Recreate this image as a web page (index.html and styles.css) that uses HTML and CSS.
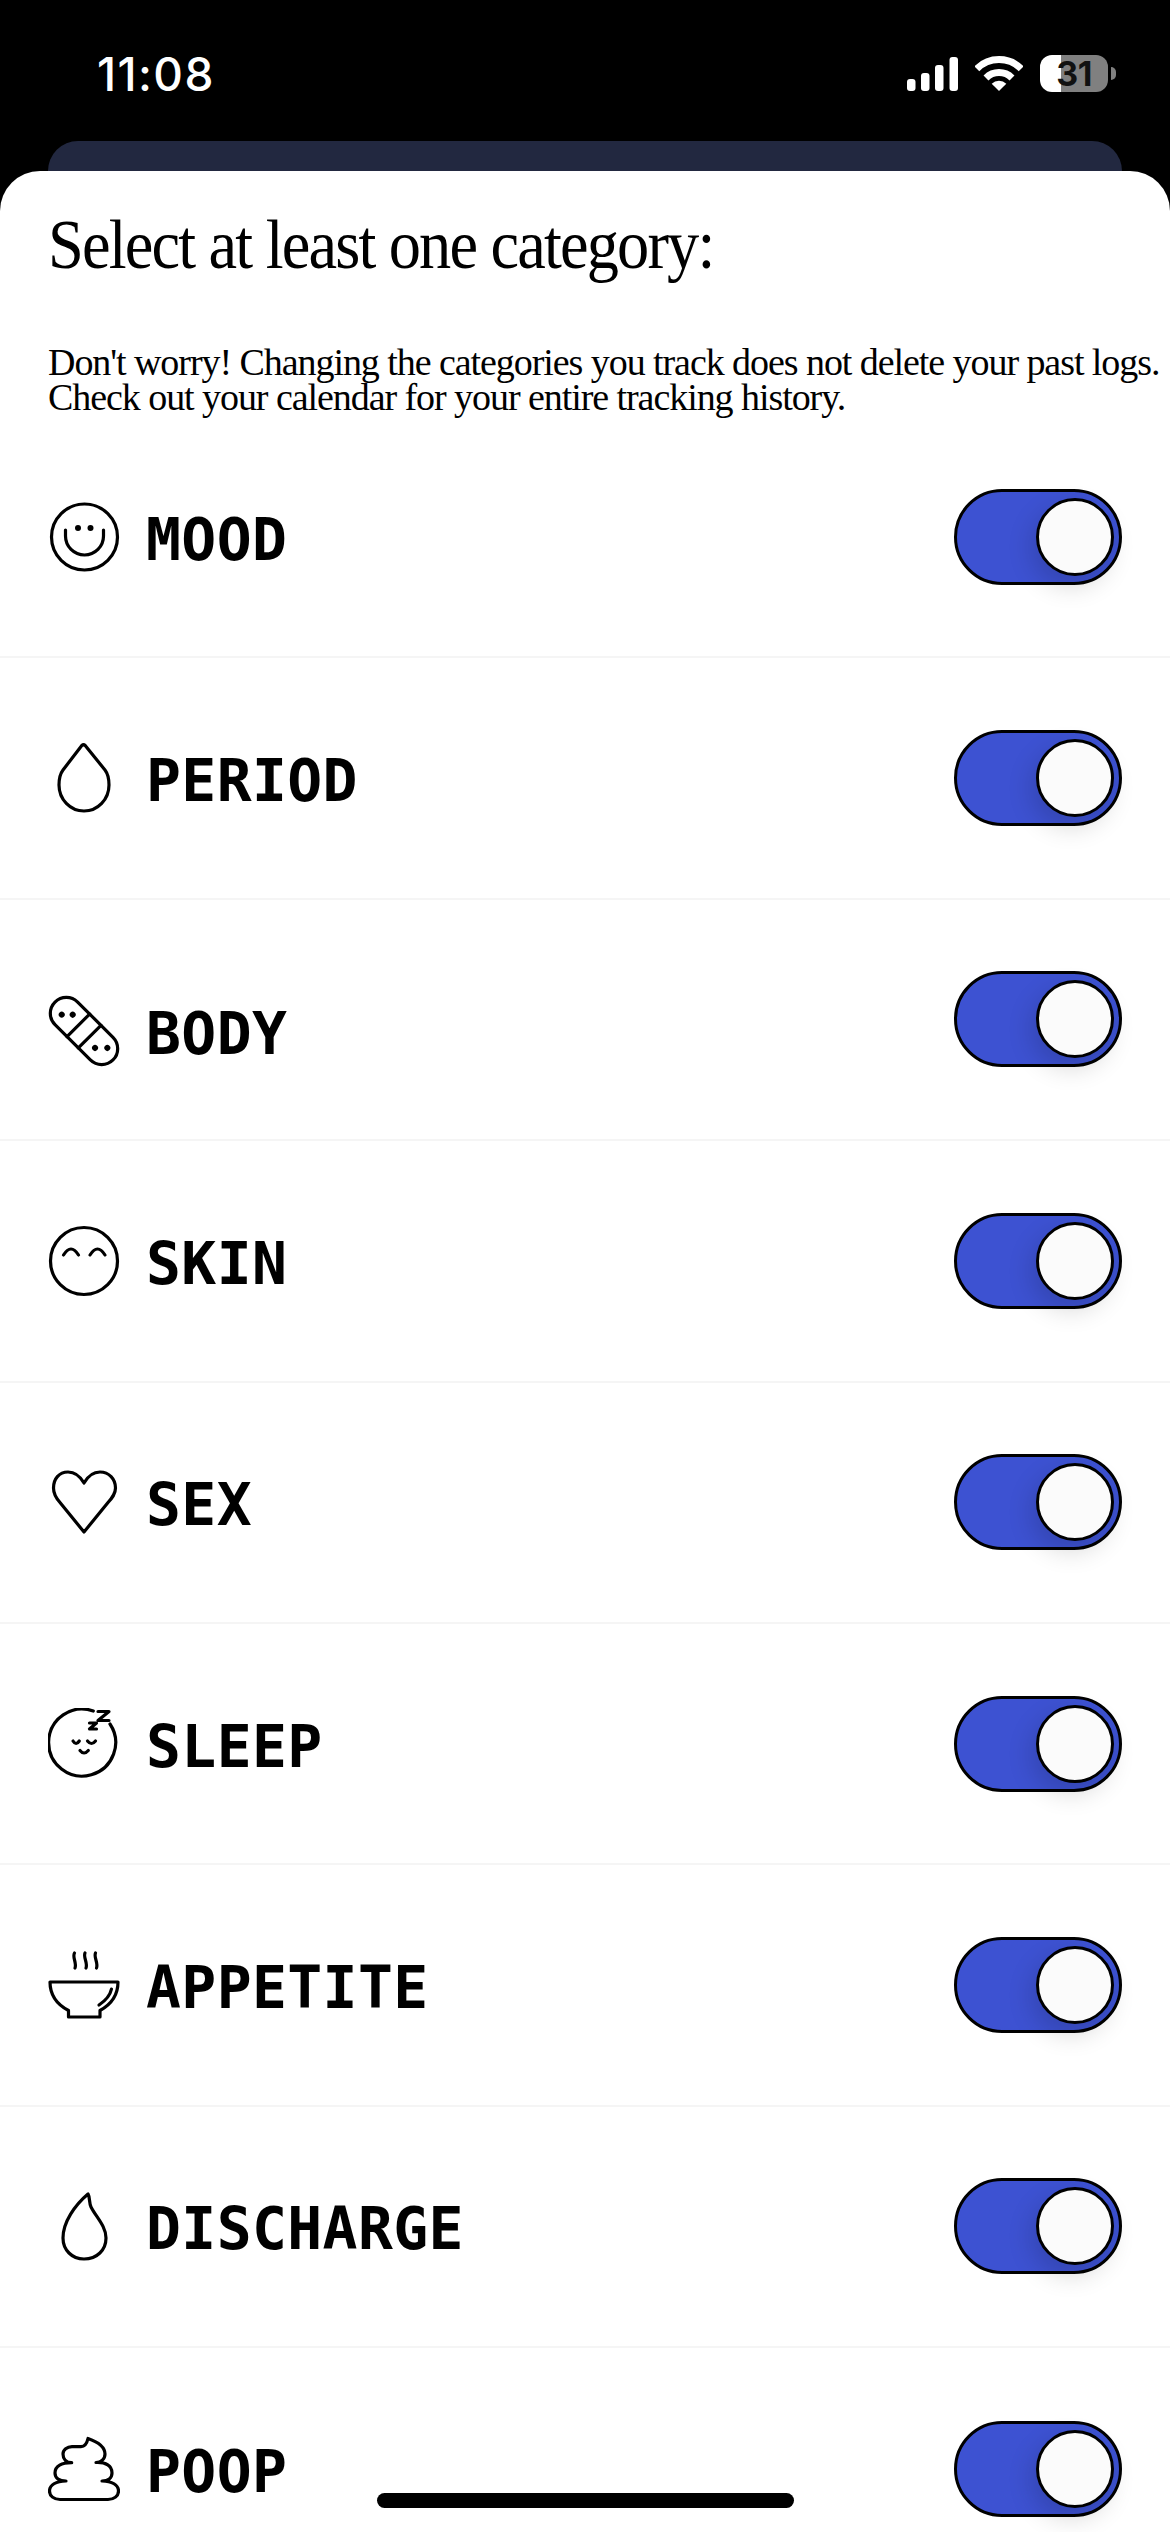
FILE: index.html
```html
<!DOCTYPE html>
<html lang="en">
<head>
<meta charset="utf-8">
<title>Select categories</title>
<link rel="stylesheet" href="styles.css">
</head>
<body>
<div class="screen">
  <header class="status">
    <span class="time">11:08</span>
    <div class="status-icons">
      <svg class="signal" width="51" height="34" viewBox="0 0 51 34"><rect x="0" y="22" width="8.5" height="12" rx="3"/><rect x="14" y="16" width="8.5" height="18" rx="3"/><rect x="28" y="8" width="8.5" height="26" rx="3"/><rect x="42.500" y="0" width="8.500" height="34" rx="3"/></svg>
      <svg class="wifi" width="48" height="35" viewBox="0 0 48 35"><path class="wifi-arc" d="M1.800 12.800A31.400 31.400 0 0 1 46.200 12.800"/><path class="wifi-arc" d="M11 22A18.400 18.400 0 0 1 37 22"/><path d="M24 35L16.700 27.700A10.300 10.300 0 0 1 31.300 27.700Z"/></svg>
      <div class="battery"><span class="battery-body">31</span><span class="battery-nub"></span></div>
    </div>
  </header>
  <div class="back-card"></div>
  <main class="sheet">
    <h1 class="title">Select at least one category:</h1>
    <p class="note">Don't worry! Changing the categories you track does not delete your past logs.<br>Check out your calendar for your entire tracking history.</p>
    <ul class="list">
      <li class="row">
        <div class="item">
          <svg class="icon" viewBox="0 0 72 72"><circle cx="36.500" cy="36" r="33"/><path d="M17.500 29V35A19 19 0 0 0 55.500 35V29"/><circle class="dot" cx="30" cy="27" r="3"/><circle class="dot" cx="42.500" cy="27" r="3"/></svg>
          <span class="label">MOOD</span>
        </div>
        <div class="toggle"><span class="thumb"></span></div>
      </li>
      <li class="row">
        <div class="item">
          <svg class="icon" viewBox="0 0 72 72"><path d="M33.800 3.500A2.500 2.500 0 0 1 37.200 3.500L57 28C60 32 61 37 61 43A25 26 0 0 1 11 43C11 37 12 32 15 28Z"/></svg>
          <span class="label">PERIOD</span>
        </div>
        <div class="toggle"><span class="thumb"></span></div>
      </li>
      <li class="row">
        <div class="item item-low">
          <svg class="icon" viewBox="0 0 72 72"><g transform="translate(36 36) rotate(45)"><rect x="-41" y="-16" width="82" height="32" rx="16"/><path d="M-8 -16V16M8 -16V16"/><circle class="dot" cx="-27.300" cy="4.200" r="3"/><circle class="dot" cx="-19.500" cy="-3.500" r="3"/><circle class="dot" cx="19.800" cy="4.200" r="3"/><circle class="dot" cx="28.500" cy="-4.500" r="3"/></g></svg>
          <span class="label">BODY</span>
        </div>
        <div class="toggle"><span class="thumb"></span></div>
      </li>
      <li class="row">
        <div class="item">
          <svg class="icon" viewBox="0 0 72 72"><circle cx="36" cy="36" r="33.500"/><path d="M15.500 30Q23 18 30.500 30M42 30Q49.500 18 57 30"/></svg>
          <span class="label">SKIN</span>
        </div>
        <div class="toggle"><span class="thumb"></span></div>
      </li>
      <li class="row">
        <div class="item">
          <svg class="icon" viewBox="0 0 72 72"><path d="M36 17C32 10 26 6 20 6C11 6 5.500 13 5.500 22C5.500 28 8 32 12 36.500L36 66L60 36.500C64 32 67.500 28 67.500 22C67.500 13 61 6 52 6C46 6 40 10 36 17Z"/></svg>
          <span class="label">SEX</span>
        </div>
        <div class="toggle"><span class="thumb"></span></div>
      </li>
      <li class="row">
        <div class="item">
          <svg class="icon" viewBox="0 0 72 72"><path d="M45.300 3A33.500 33.500 0 1 0 62 16"/><path d="M50 3.500H61L50 12.500H61M41.500 15H48.500L41.500 21H48.500"/><path d="M25 33Q28 38 31.300 33M39.500 33Q43.500 38 47.500 33M32 42.500Q36 47.500 40.300 42.500"/></svg>
          <span class="label">SLEEP</span>
        </div>
        <div class="toggle"><span class="thumb"></span></div>
      </li>
      <li class="row">
        <div class="item">
          <svg class="icon" viewBox="0 0 72 72"><path d="M2 33H70C70 47 62 56 52 61.500V68H20.500V61.500C10 56 2 47 2 33Z"/><path d="M51 56C57 52 62 47 63.500 40"/><path d="M26.500 4C24 8 29 14 27 19M37 4C35 8 40 14 38 19M47.500 4C45.500 8 50.500 14 48.500 19"/></svg>
          <span class="label">APPETITE</span>
        </div>
        <div class="toggle"><span class="thumb"></span></div>
      </li>
      <li class="row">
        <div class="item">
          <svg class="icon" viewBox="0 0 72 72"><path d="M40 4C27 15 15 32 15 48C15 60 24 69 36 69C49 69 58 60 58 48C58 36 48 27 43 17C41 13 42 7 40 4Z"/></svg>
          <span class="label">DISCHARGE</span>
        </div>
        <div class="toggle"><span class="thumb"></span></div>
      </li>
      <li class="row">
        <div class="item">
          <svg class="icon" viewBox="0 0 72 72"><path d="M40 5.500C50 9 57 14 57 21C57 26 53 29.500 48 29.500C58 29 64 33 64 40C64 45 60 48 54 48C64 48 70.500 52 70.500 58C70.500 63 66 66.500 60 66.500H12C6 66.500 1.500 63 1.500 58C1.500 52 8 48 18 48C11 48 7 45 7 40C7 33 14 29.700 23.700 29.700C18 29.700 15 26 15 21C15 17 19 13.700 24 13.700H33C37 13.700 39 10 40 5.500Z"/></svg>
          <span class="label">POOP</span>
        </div>
        <div class="toggle"><span class="thumb"></span></div>
      </li>
    </ul>
  </main>
  <div class="home-indicator"></div>
</div>
</body>
</html>
```
FILE: styles.css
```css
* { box-sizing: border-box; }
html, body { margin: 0; padding: 0; background: #000; }
.screen { position: relative; width: 1170px; height: 2532px; overflow: hidden; background: #000; }

.status { height: 141px; display: flex; justify-content: space-between; align-items: flex-start; padding: 55px 54px 0 97px; color: #fff; }
.time { font-family: Inter, "Liberation Sans", sans-serif; font-size: 46px; font-weight: 500; line-height: 38px; letter-spacing: 1.4px; }
.status-icons { display: flex; align-items: flex-start; }
.signal { fill: #fff; margin: 2px 17px 0 0; }
.wifi { fill: #fff; margin: 1px 17px 0 0; }
.wifi-arc { fill: none; stroke: #fff; stroke-width: 7; }
.battery { display: flex; align-items: center; }
.battery-body { width: 68px; height: 37px; border-radius: 12px; background: linear-gradient(90deg, #fff 31%, #808080 31%); color: #111; font-family: Inter, "Liberation Sans", sans-serif; font-size: 34px; font-weight: 700; line-height: 37px; text-align: center; letter-spacing: -.5px; }
.battery-nub { width: 5px; height: 13px; margin-left: 3px; background: #808080; border-radius: 0 6px 6px 0; }

.back-card { height: 60px; margin: 0 48px; background: #222840; border-radius: 30px 30px 0 0; }

.sheet { margin-top: -30px; height: 2361px; background: #fff; border-radius: 40px 40px 0 0; color: #000; overflow: hidden; }
.title { margin: 0; padding: 34px 0 0 48px; font-family: "Liberation Serif", serif; font-size: 70px; font-weight: 400; line-height: 80px; white-space: nowrap; letter-spacing: -2px; transform: scaleX(.92); transform-origin: 48px center; }
.note { margin: 0; padding: 60px 0 0 48px; font-family: "Liberation Serif", serif; font-size: 38px; line-height: 35px; white-space: nowrap; letter-spacing: -1.06px; }

.list { margin: 2px 0 0; padding: 0; list-style: none; }
.row { height: 241.4px; padding: 0 48px; display: flex; align-items: center; justify-content: space-between; border-bottom: 2px solid #f5f5f5; }
.row:last-child { border-bottom: 0; }
.item { display: flex; align-items: center; gap: 26px; }
.item-low { margin-top: 23px; }
.icon { width: 72px; height: 72px; fill: none; stroke: #000; stroke-width: 3.2; stroke-linejoin: round; stroke-linecap: round; }
.icon .dot { fill: #000; stroke: none; }
.label { padding-top: 6px; font-family: "DejaVu Sans Mono", monospace; font-size: 58px; font-weight: 700; line-height: 64px; letter-spacing: .4px; }

.toggle { position: relative; width: 168px; height: 96px; border: 3.5px solid #000; border-radius: 48px; background: #3d52d2; display: flex; align-items: center; justify-content: flex-end; padding-right: 5px; }
.thumb { width: 78px; height: 78px; border-radius: 50%; border: 3.5px solid #000; background: #fbfbfb; box-shadow: -4px 10px 26px rgba(0, 0, 0, .16); }

.home-indicator { position: absolute; left: 377px; bottom: 24px; width: 417px; height: 15px; border-radius: 8px; background: #000; }
```
